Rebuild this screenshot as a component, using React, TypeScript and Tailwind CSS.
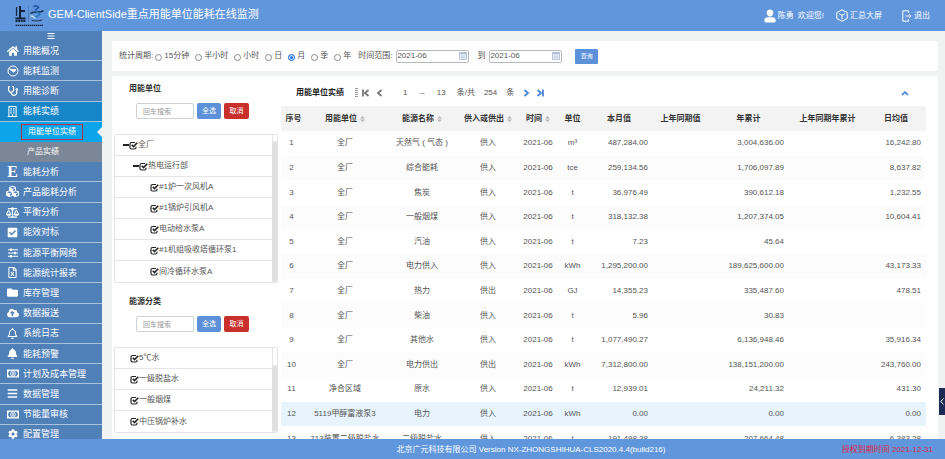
import { useState } from "react";
import {
  FaHome,
  FaStethoscope,
  FaRegBuilding,
  FaCubes,
  FaBalanceScale,
  FaCheckSquare,
  FaRegFileExcel,
  FaFolder,
  FaCloudUploadAlt,
  FaRegBell,
  FaBell,
  FaBars,
  FaCog,
} from "react-icons/fa";

/* ── Icons ── */
function Logo() {
  return (
    <svg width="30" height="22" viewBox="0 0 30 22" aria-hidden="true">
      <g fill="none" stroke="#14233a">
        <path d="M5 1v12M5.5 6h4.5M0.5 13.5h10" strokeWidth="2" />
        <path d="M1.5 2v9" strokeWidth="1.2" />
        <path d="M0.5 16h10" strokeWidth="2" strokeDasharray="2 0.6" />
      </g>
      <path d="M13.5 1v16" stroke="#4a76b4" strokeWidth="0.8" />
      <g fill="none" strokeLinecap="round" strokeWidth="1.5">
        <path d="M19 1.500c2-1 4-1 4.500 1l-3 2.500" stroke="#1c4f9c" />
        <path d="M16 8c4-2 8 0 12-2" stroke="#1a2f55" />
        <path d="M21 6l4 3.500-5 3" stroke="#2a78bb" />
        <path d="M16 11c2 0 3 1 4 2" stroke="#b9dcef" />
        <path d="M17 15.500c4 .6 7 .6 10-.5" stroke="#1a2f55" strokeWidth="1" />
      </g>
      <path d="M0.5 20.3h28" stroke="#14233a" strokeWidth="1.3" strokeDasharray="2 0.5 1 0.5" />
    </svg>
  );
}

function MonitorIcon() {
  return (
    <svg width="12" height="12" viewBox="0 0 24 24" fill="none" stroke="currentColor" strokeWidth="2">
      <circle cx="12" cy="12" r="10" />
      <path d="M5 8l7 1.500 6-.5-4 5.500z" fill="currentColor" />
    </svg>
  );
}

function EnergyIcon() {
  return <span className="font-['Liberation_Serif',serif] text-[16px] font-bold leading-none">E</span>;
}

function SlidersIcon() {
  return (
    <svg width="10" height="10" viewBox="0 0 20 20" fill="none" stroke="currentColor">
      <path d="M0 3.500h20M0 10h20M0 16.500h20" strokeWidth="2" />
      <path d="M6 1v5M14 7.500v5M6 14v5" strokeWidth="4" />
    </svg>
  );
}

function MoneyIcon() {
  return (
    <svg width="12" height="9" viewBox="0 0 24 18" fill="none" stroke="currentColor">
      <path d="M1.200 2.200h21.600v13.600H1.200z" strokeWidth="2.400" />
      <path d="M2 3h4L2 7zM22 3h-4l4 4zM2 15h4l-4-4zM22 15h-4l4-4z" fill="currentColor" stroke="none" />
      <ellipse cx="12" cy="9" rx="4.500" ry="5.500" strokeWidth="2" />
      <path d="M12 6v6" strokeWidth="2.400" />
    </svg>
  );
}

function UserIcon() {
  return (
    <svg width="12" height="14" viewBox="0 0 12 14" fill="currentColor">
      <path d="M6 0.500a3.300 3.300 0 0 1 3.300 3.600C9.200 6 7.800 7.700 6 7.700S2.800 6 2.700 4.100A3.300 3.300 0 0 1 6 .5z" />
      <path d="M3.500 8.200h5c2 0 3.200 1.500 3.200 3.300 0 1.200-.6 2-1.700 2H2c-1.100 0-1.700-.8-1.700-2 0-1.800 1.200-3.300 3.200-3.300z" />
    </svg>
  );
}

function CubeIcon() {
  return (
    <svg width="12" height="13" viewBox="0 0 12 13" fill="none" stroke="currentColor" strokeLinejoin="round">
      <path d="M6 .8l5.200 2.700v6L6 12.200.8 9.500v-6zM3 4.700l3 1.600 3-1.600M6 6.300v4" />
    </svg>
  );
}

function ExitIcon() {
  return (
    <svg width="10" height="12" viewBox="0 0 10 12" fill="none" stroke="currentColor">
      <path d="M6.500 3V.8H.8v10.400h5.700V9M3.500 6h5.300M7 4l2 2-2 2" />
    </svg>
  );
}

function CheckIcon() {
  return (
    <svg width="9" height="9" viewBox="0 0 18 18" fill="none" stroke="#222" className="shrink-0">
      <path d="M12 3H5Q2 3 2 6v7q0 3 3 3h6q3 0 3-3v-1.500" strokeWidth="2.400" />
      <path d="M5.500 7.500l3.500 3.500 7.500-7.500" strokeWidth="3.200" />
    </svg>
  );
}

function CalendarIcon() {
  return (
    <svg width="8" height="8" viewBox="0 0 8 8" className="shrink-0">
      <path d="M.5.5h7v7h-7z" fill="#e3eaf4" stroke="#b9c6da" />
      <path d="M1 1.500h6" stroke="#a3b5d2" />
      <path d="M2 4h4M2 5.500h4" stroke="#b4c1d6" strokeWidth="0.600" />
    </svg>
  );
}

function SortIcon() {
  return (
    <svg width="5" height="6" viewBox="0 0 5 6" fill="#b5b5b5">
      <path d="M0 2.500L2.500 0 5 2.500zM0 3.500L2.500 6 5 3.500z" />
    </svg>
  );
}

function GripIcon() {
  return (
    <svg width="3" height="10" viewBox="0 0 3 10" stroke="#999" className="shrink-0">
      <path d="M0 .5h3M0 2.500h3M0 4.500h3M0 6.500h3M0 8.500h3" />
    </svg>
  );
}

function Chevron({ d, width = 7 }: { d: string; width?: number }) {
  return (
    <svg width={width} height="8" viewBox={`0 0 ${width} 8`} fill="none" stroke="currentColor" strokeWidth="1.800">
      <path d={d} />
    </svg>
  );
}

/* ── Data ── */
const MENU_TOP = [
  { icon: <FaHome size={12} />, label: "用能概况" },
  { icon: <MonitorIcon />, label: "能耗监测" },
  { icon: <FaStethoscope size={10} />, label: "用能诊断" },
];

const MENU_REST = [
  { icon: <EnergyIcon />, label: "能耗分析" },
  { icon: <FaCubes size={13} />, label: "产品能耗分析" },
  { icon: <FaBalanceScale size={13} />, label: "平衡分析" },
  { icon: <FaCheckSquare size={11} />, label: "能效对标" },
  { icon: <SlidersIcon />, label: "能源平衡网络" },
  { icon: <FaRegFileExcel size={11} />, label: "能源统计报表" },
  { icon: <FaFolder size={11} />, label: "库存管理" },
  { icon: <FaCloudUploadAlt size={12} />, label: "数据报送" },
  { icon: <FaRegBell size={11} />, label: "系统日志" },
  { icon: <FaBell size={11} />, label: "能耗预警" },
  { icon: <MoneyIcon />, label: "计划及成本管理" },
  { icon: <FaBars size={11} />, label: "数据管理" },
  { icon: <MoneyIcon />, label: "节能量审核" },
  { icon: <FaCog size={10} />, label: "配置管理" },
];

const PERIODS = ["15分钟", "半小时", "小时", "日", "月", "季", "年"];

type TreeRow = { label: string; level: number };

const UNITS: TreeRow[] = [
  { label: "全厂", level: 0 },
  { label: "热电运行部", level: 1 },
  { label: "#1炉一次风机A", level: 2 },
  { label: "#1锅炉引风机A", level: 2 },
  { label: "电动给水泵A", level: 2 },
  { label: "#1机组吸收塔循环泵1", level: 2 },
  { label: "间冷循环水泵A", level: 2 },
];

const ENERGIES: TreeRow[] = [
  { label: "5℃水", level: 3 },
  { label: "一级脱盐水", level: 3 },
  { label: "一般烟煤", level: 3 },
  { label: "中压锅炉补水", level: 3 },
];

const INDENT = ["pl-2", "pl-[18px]", "pl-[35px]", "pl-[15px]"];

const COLUMNS = [
  { label: "序号", width: "w-[25px]" },
  { label: "用能单位", width: "w-[78px]", sort: true },
  { label: "能源名称", width: "w-[76px]", sort: true },
  { label: "供入或供出", width: "w-[56px]", sort: true },
  { label: "时间", width: "w-[44px]", sort: true },
  { label: "单位", width: "w-[25px]" },
  { label: "本月值", width: "w-[68px]" },
  { label: "上年同期值", width: "w-[55px]" },
  { label: "年累计", width: "w-[81px]" },
  { label: "上年同期年累计", width: "w-[77px]" },
  { label: "日均值", width: "w-[60px]" },
];

const ROWS = [
  ["全厂", "天然气 ( 气态 )", "供入", "m³", "487,284.00", "3,004,636.00", "16,242.80"],
  ["全厂", "综合能耗", "供入", "tce", "259,134.56", "1,706,097.89", "8,637.82"],
  ["全厂", "焦炭", "供入", "t", "36,976.49", "390,612.18", "1,232.55"],
  ["全厂", "一般烟煤", "供入", "t", "318,132.38", "1,207,374.05", "10,604.41"],
  ["全厂", "汽油", "供入", "t", "7.23", "45.64", ""],
  ["全厂", "电力供入", "供入", "kWh", "1,295,200.00", "189,625,600.00", "43,173.33"],
  ["全厂", "热力", "供出", "GJ", "14,355.23", "335,487.60", "478.51"],
  ["全厂", "柴油", "供入", "t", "5.96", "30.83", ""],
  ["全厂", "其他水", "供入", "t", "1,077,490.27", "6,136,948.46", "35,916.34"],
  ["全厂", "电力供出", "供出", "kWh", "7,312,800.00", "138,151,200.00", "243,760.00"],
  ["净合区域", "原水", "供入", "t", "12,939.01", "24,211.32", "431.30"],
  ["5119甲醇富液泵3", "电力", "供入", "kWh", "0.00", "0.00", "0.00"],
  ["713装置二级脱盐水", "二级脱盐水", "供入", "t", "191,498.38", "207,664.48", "6,383.28"],
];

/* ── Layout parts ── */
function Header() {
  return (
    <header className="flex h-[31px] shrink-0 items-center bg-[#6096dc] pl-[15px] pr-[15px] text-white">
      <Logo />
      <h1 className="ml-[3px] whitespace-nowrap pb-1 text-[11px] leading-4">GEM-ClientSide重点用能单位能耗在线监测</h1>
      <div className="ml-auto flex items-center whitespace-nowrap">
        <a href="#user" className="flex items-center gap-[2px]">
          <UserIcon />
          <span>陈勇</span>
          <span className="ml-[2px]">欢迎您!</span>
        </a>
        <a href="#screen" className="ml-3 flex items-center gap-[2px]">
          <CubeIcon />
          汇总大屏
        </a>
        <a href="#logout" className="ml-5 flex items-center gap-[2px]">
          <ExitIcon />
          退出
        </a>
      </div>
    </header>
  );
}

function MenuItem({ icon, label, active }: { icon: React.ReactNode; label: string; active?: boolean }) {
  return (
    <li className={active ? "border-b border-[#a9c3df] bg-[#1686c9]" : "border-b border-[#a9c3df]"}>
      <a href="#menu" className="flex h-full items-center pl-[6px]">
        <span className="flex w-[13px] justify-center">{icon}</span>
        <span className="ml-1">{label}</span>
      </a>
    </li>
  );
}

function Sidebar() {
  return (
    <nav className="w-[102px] shrink-0 overflow-hidden bg-[#4f80b8] text-[9px] text-white">
      <button aria-label="折叠菜单" className="flex h-[10px] w-full items-center justify-center">
        <FaBars size={8} />
      </button>
      <ul className="grid h-[404px] auto-rows-fr whitespace-nowrap">
        {MENU_TOP.map((m) => (
          <MenuItem key={m.label} {...m} />
        ))}
        <MenuItem icon={<FaRegBuilding size={11} />} label="能耗实绩" active />
        <li className="relative bg-[#0ca5ea] text-[8px]">
          <a href="#unit" className="flex h-full items-center pl-[21px]">
            <span className="border border-[#b8324f] px-[6px] leading-[14px]">用能单位实绩</span>
          </a>
          <span className="absolute right-0 top-[5px] border-y-[5px] border-r-[5px] border-y-transparent border-r-[#f1f3f3]" />
        </li>
        <li className="bg-[#7b8796] text-[8px]">
          <a href="#product" className="flex h-full items-center pl-[27px]">
            产品实绩
          </a>
        </li>
        {MENU_REST.map((m) => (
          <MenuItem key={m.label} {...m} />
        ))}
      </ul>
    </nav>
  );
}

function MonthField({ label, id }: { label: string; id: string }) {
  return (
    <div className="flex items-center gap-1">
      <label htmlFor={id}>{label}</label>
      <span className="flex h-[13px] w-[73px] items-center rounded-[2px] border border-[#b5b9c0] pr-[1px]">
        <input id={id} defaultValue="2021-06" className="w-full min-w-0 bg-transparent text-[8px] outline-none" />
        <CalendarIcon />
      </span>
    </div>
  );
}

function FilterBar() {
  const [period, setPeriod] = useState("月");
  return (
    <section className="flex h-[30px] shrink-0 items-center whitespace-nowrap rounded-[2px] bg-white pl-[7px]">
      <span>统计周期:</span>
      <div className="ml-[2px] flex gap-[6px]">
        {PERIODS.map((p) => (
          <label key={p} className="flex items-center gap-[2px]">
            <input
              type="radio"
              name="period"
              checked={period === p}
              onChange={() => setPeriod(p)}
              className="mt-[2px] size-[7px] appearance-none rounded-full border border-[#8a8a8a] bg-white checked:border-[#1a73e8] checked:bg-[#1a73e8] checked:shadow-[inset_0_0_0_1px_#fff]"
            />
            {p}
          </label>
        ))}
      </div>
      <div className="ml-[7px] flex gap-2">
        <MonthField id="from" label="时间范围:" />
        <MonthField id="to" label="到" />
      </div>
      <button className="ml-[13px] h-[15px] w-[23px] rounded-[1px] bg-[#5c90d8] text-[6px] text-white">查询</button>
    </section>
  );
}

function TreePanel({ title, rows, id, track }: { title: string; rows: TreeRow[]; id: string; track: string }) {
  return (
    <section className="pl-[2px]">
      <h2 className="pl-[15px] font-bold leading-3 text-[#333]">{title}</h2>
      <div className="mt-2 flex gap-[3px] pl-[22px]">
        <input
          id={id}
          aria-label={title}
          placeholder="回车搜索"
          className="h-4 w-[58px] rounded-[2px] border border-[#d0d0d0] px-[6px] text-[7px] outline-none placeholder:text-[#999]"
        />
        <button className="h-4 w-[24px] rounded-[2px] bg-[#5c90d8] text-[7px] text-white">全选</button>
        <button className="h-4 w-[25px] rounded-[2px] bg-[#c9302c] text-[7px] text-white">取消</button>
      </div>
      <div className="mt-[15px] flex rounded-[2px] border border-[#e3e3e3]">
        <ul className="flex-1">
          {rows.map((r) => (
            <li
              key={r.label}
              className={`flex h-[21px] items-center border-b border-[#e6e6e6] last:border-b-0 ${INDENT[r.level]}`}
            >
              {r.level < 2 && <span className="h-[2px] w-[6px] bg-[#222]" />}
              <CheckIcon />
              {r.label}
            </li>
          ))}
        </ul>
        <div className="flex w-[5px] flex-col border-l border-[#e3e3e3]">
          <span className={track} />
          <span className="flex-1 rounded-full bg-[#e0e0e0]" />
        </div>
      </div>
    </section>
  );
}

function Pager() {
  return (
    <div className="flex h-[30px] items-center whitespace-nowrap pl-[15px] pr-[17px] pt-[3px]">
      <h2 className="font-bold text-[#222]">用能单位实绩</h2>
      <span className="ml-[11px]">
        <GripIcon />
      </span>
      <button aria-label="首页" className="ml-1 text-[#777]">
        <Chevron d="M1 0.500v7M6.500 1l-3.500 3 3.500 3" width={8} />
      </button>
      <button aria-label="上一页" className="ml-[6px] text-[#777]">
        <Chevron d="M5.500 1L2 4l3.500 3" />
      </button>
      <span className="ml-5">1</span>
      <span className="ml-3">--</span>
      <span className="ml-3">13</span>
      <span className="ml-[11px]">条/共</span>
      <span className="ml-[9px]">254</span>
      <span className="ml-[9px]">条</span>
      <button aria-label="下一页" className="ml-[9px] text-[#4a86d8]">
        <Chevron d="M1.500 1L5 4 1.500 7" />
      </button>
      <button aria-label="末页" className="ml-[6px] text-[#4a86d8]">
        <Chevron d="M1.500 1L5 4 1.500 7M7 0.500v7" width={8} />
      </button>
      <button aria-label="收起" className="ml-auto text-[#5c90d8]">
        <Chevron d="M1 6l3-3 3 3" width={8} />
      </button>
    </div>
  );
}

function DataTable() {
  return (
    <table className="h-[345px] w-full table-fixed whitespace-nowrap text-center">
      <thead>
        <tr className="h-[25px] bg-[#f3f3f3] text-[#333]">
          {COLUMNS.map((c) => (
            <th key={c.label} className={`p-0 font-bold ${c.width}`}>
              <span className="flex items-center justify-center gap-[3px]">
                {c.label}
                {c.sort && <SortIcon />}
              </span>
            </th>
          ))}
        </tr>
      </thead>
      <tbody>
        {ROWS.map(([unit, energy, dir, measure, month, year, avg], i) => (
          <tr key={i} className={i === 11 ? "h-6 bg-[#e7f4fc]" : "h-6 even:bg-[#fcfcfc]"}>
            <td className="pr-1">{i + 1}</td>
            <td>{unit}</td>
            <td>{energy}</td>
            <td>{dir}</td>
            <td>2021-06</td>
            <td>{measure}</td>
            <td className="pr-[5px] text-right">{month}</td>
            <td />
            <td className="pr-[5px] text-right">{year}</td>
            <td />
            <td className="pr-[5px] text-right">{avg}</td>
          </tr>
        ))}
      </tbody>
    </table>
  );
}

export default function App() {
  return (
    <div className="flex h-screen flex-col overflow-hidden bg-[#f1f3f3] font-['Liberation_Sans','Noto_Sans_CJK_SC',sans-serif] text-[8px] leading-3 text-[#555]">
      <Header />
      <div className="relative flex min-h-0 flex-1">
        <Sidebar />
        <main className="flex min-w-0 flex-1 flex-col gap-[5px] overflow-hidden pl-[10px] pr-[7px] pt-[10px]">
          <FilterBar />
          <div className="flex min-h-0 flex-1 overflow-hidden rounded-t-[2px] bg-white pr-3">
            <aside className="flex w-[169px] shrink-0 flex-col gap-[13px] pr-[3px] pt-[7px]">
              <TreePanel id="unit-search" title="用能单位" rows={UNITS} track="h-[6px]" />
              <TreePanel id="energy-search" title="能源分类" rows={ENERGIES} track="h-[17px]" />
            </aside>
            <section className="min-w-0 flex-1">
              <Pager />
              <DataTable />
            </section>
          </div>
        </main>
        <button
          aria-label="展开侧栏"
          className="absolute bottom-[24px] right-0 flex h-[27px] w-[6px] items-center justify-center bg-[#1d2b56] text-white"
        >
          <svg width="4" height="7" viewBox="0 0 4 7" fill="none" stroke="currentColor">
            <path d="M3.500.5L.8 3.500l2.700 3" />
          </svg>
        </button>
      </div>
      <footer className="flex h-5 shrink-0 items-center bg-[#6096dc] pl-[129px] pr-3 pt-[2px] text-white">
        <span className="flex-1" />
        <span>北京广元科技有限公司 Version NX-ZHONGSHIHUA-CLS2020.4.4(build216)</span>
        <span className="flex-1 text-right text-[#dc2848]">授权到期时间 2021-12-31</span>
      </footer>
    </div>
  );
}
